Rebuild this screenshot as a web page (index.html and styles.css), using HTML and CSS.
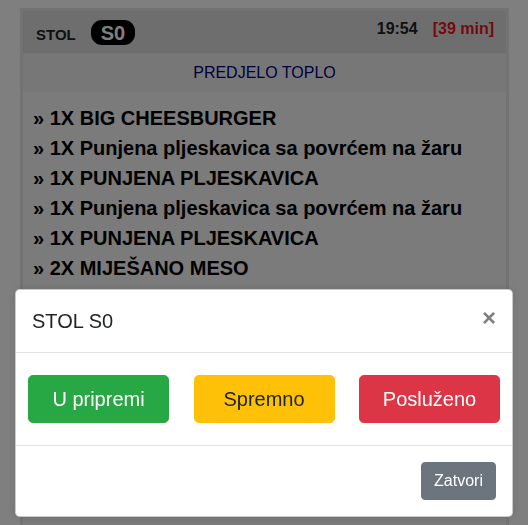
FILE: index.html
```html
<!DOCTYPE html>
<html lang="hr">
<head>
<meta charset="utf-8">
<title>Narudžba STOL S0</title>
<link rel="stylesheet" href="styles.css">
</head>
<body>
<div class="page">
  <div class="order-card">
    <div class="order-head">
      <div class="table-id">
        <span class="table-label">STOL</span>
        <span class="table-badge">S0</span>
      </div>
      <div class="order-time">
        <span class="clock">19:54</span>
        <span class="elapsed">[39 min]</span>
      </div>
    </div>
    <div class="course">PREDJELO TOPLO</div>
    <ul class="items">
      <li>» 1X BIG CHEESBURGER</li>
      <li>» 1X Punjena pljeskavica sa povrćem na žaru</li>
      <li>» 1X PUNJENA PLJESKAVICA</li>
      <li>» 1X Punjena pljeskavica sa povrćem na žaru</li>
      <li>» 1X PUNJENA PLJESKAVICA</li>
      <li>» 2X MIJEŠANO MESO</li>
    </ul>
  </div>
</div>
<div class="backdrop"></div>
<div class="modal">
  <div class="modal-head">
    <h5 class="modal-title">STOL S0</h5>
    <button class="close" type="button" aria-label="Close">×</button>
  </div>
  <div class="modal-body">
    <button class="btn btn-lg btn-green" type="button">U pripremi</button>
    <button class="btn btn-lg btn-yellow" type="button">Spremno</button>
    <button class="btn btn-lg btn-red" type="button">Posluženo</button>
  </div>
  <div class="modal-foot">
    <button class="btn btn-grey" type="button">Zatvori</button>
  </div>
</div>
</body>
</html>
```
FILE: styles.css
```css
* { box-sizing: border-box; }
html, body {
  margin: 0;
  padding: 0;
  height: 100%;
  overflow: hidden;
  background: #fff;
  font-family: "Liberation Sans", Arial, sans-serif;
  color: #212529;
}
.page {
  padding: 8px 19px 0 20px;
  height: 100%;
}
.order-card {
  border: 3px solid #e6e6e6;
  border-bottom: 0;
  background: #f7f7f7;
  height: 100%;
}
.order-head {
  display: flex;
  justify-content: space-between;
  align-items: flex-start;
  background: #dcdcdc;
  padding: 9px 12px 8px 13px;
  border-bottom: 1px solid #e6e6e6;
}
.table-id {
  display: flex;
  align-items: baseline;
  gap: 15px;
}
.table-label {
  font-size: 15px;
  font-weight: bold;
  color: #222;
}
.table-badge {
  display: inline-block;
  background: #000;
  color: #fff;
  font-size: 20px;
  font-weight: bold;
  line-height: 20px;
  padding: 2.5px 10px;
  border-radius: 11px;
}
.order-time {
  display: flex;
  gap: 15px;
  font-size: 16px;
  font-weight: bold;
  line-height: 18px;
}
.clock { color: #222; }
.elapsed { color: #e8141e; }
.course {
  background: #efefef;
  text-align: center;
  color: #000080;
  font-size: 16px;
  line-height: 20px;
  padding: 9px 0;
}
.items {
  list-style: none;
  margin: 0;
  padding: 11px 10px;
}
.items li {
  font-size: 20px;
  font-weight: bold;
  line-height: 30px;
  color: #000;
  white-space: nowrap;
}
.backdrop {
  position: fixed;
  inset: 0;
  background: rgba(0, 0, 0, 0.5);
}
.modal {
  position: fixed;
  top: 289px;
  left: 15px;
  width: 498px;
  background: #fff;
  border: 1px solid rgba(0, 0, 0, 0.2);
  border-radius: 4.8px;
  box-shadow: 0 0 10px rgba(0, 0, 0, 0.12);
}
.modal-head {
  display: flex;
  align-items: flex-start;
  justify-content: space-between;
  padding: 16px;
  border-bottom: 1px solid #dee2e6;
}
.modal-title {
  margin: 0;
  font-size: 20px;
  font-weight: normal;
  line-height: 30px;
  color: #212529;
}
.close {
  margin: -16px -16px -16px auto;
  padding: 16px;
  background: transparent;
  border: 0;
  font-family: "Liberation Sans", Arial, sans-serif;
  font-size: 24px;
  font-weight: bold;
  line-height: 24px;
  color: #000;
  opacity: 0.5;
  text-shadow: 0 1px 0 #fff;
}
.modal-body {
  display: grid;
  grid-template-columns: repeat(3, 1fr);
  column-gap: 24.5px;
  padding: 22px 12px;
}
.btn {
  font-family: "Liberation Sans", Arial, sans-serif;
  border: 1px solid transparent;
  text-align: center;
  font-size: 16px;
  line-height: 24px;
  padding: 6px 12px;
  border-radius: 4px;
  color: #fff;
}
.btn-lg {
  font-size: 20px;
  line-height: 30px;
  padding: 8px 16px;
  border-radius: 4.8px;
}
.btn-green { background: #28a745; border-color: #28a745; }
.btn-yellow { background: #ffc107; border-color: #ffc107; color: #212529; }
.btn-red { background: #dc3545; border-color: #dc3545; }
.btn-grey { background: #6c757d; border-color: #6c757d; }
.modal-foot {
  display: flex;
  justify-content: flex-end;
  padding: 16px;
  border-top: 1px solid #dee2e6;
}
```
